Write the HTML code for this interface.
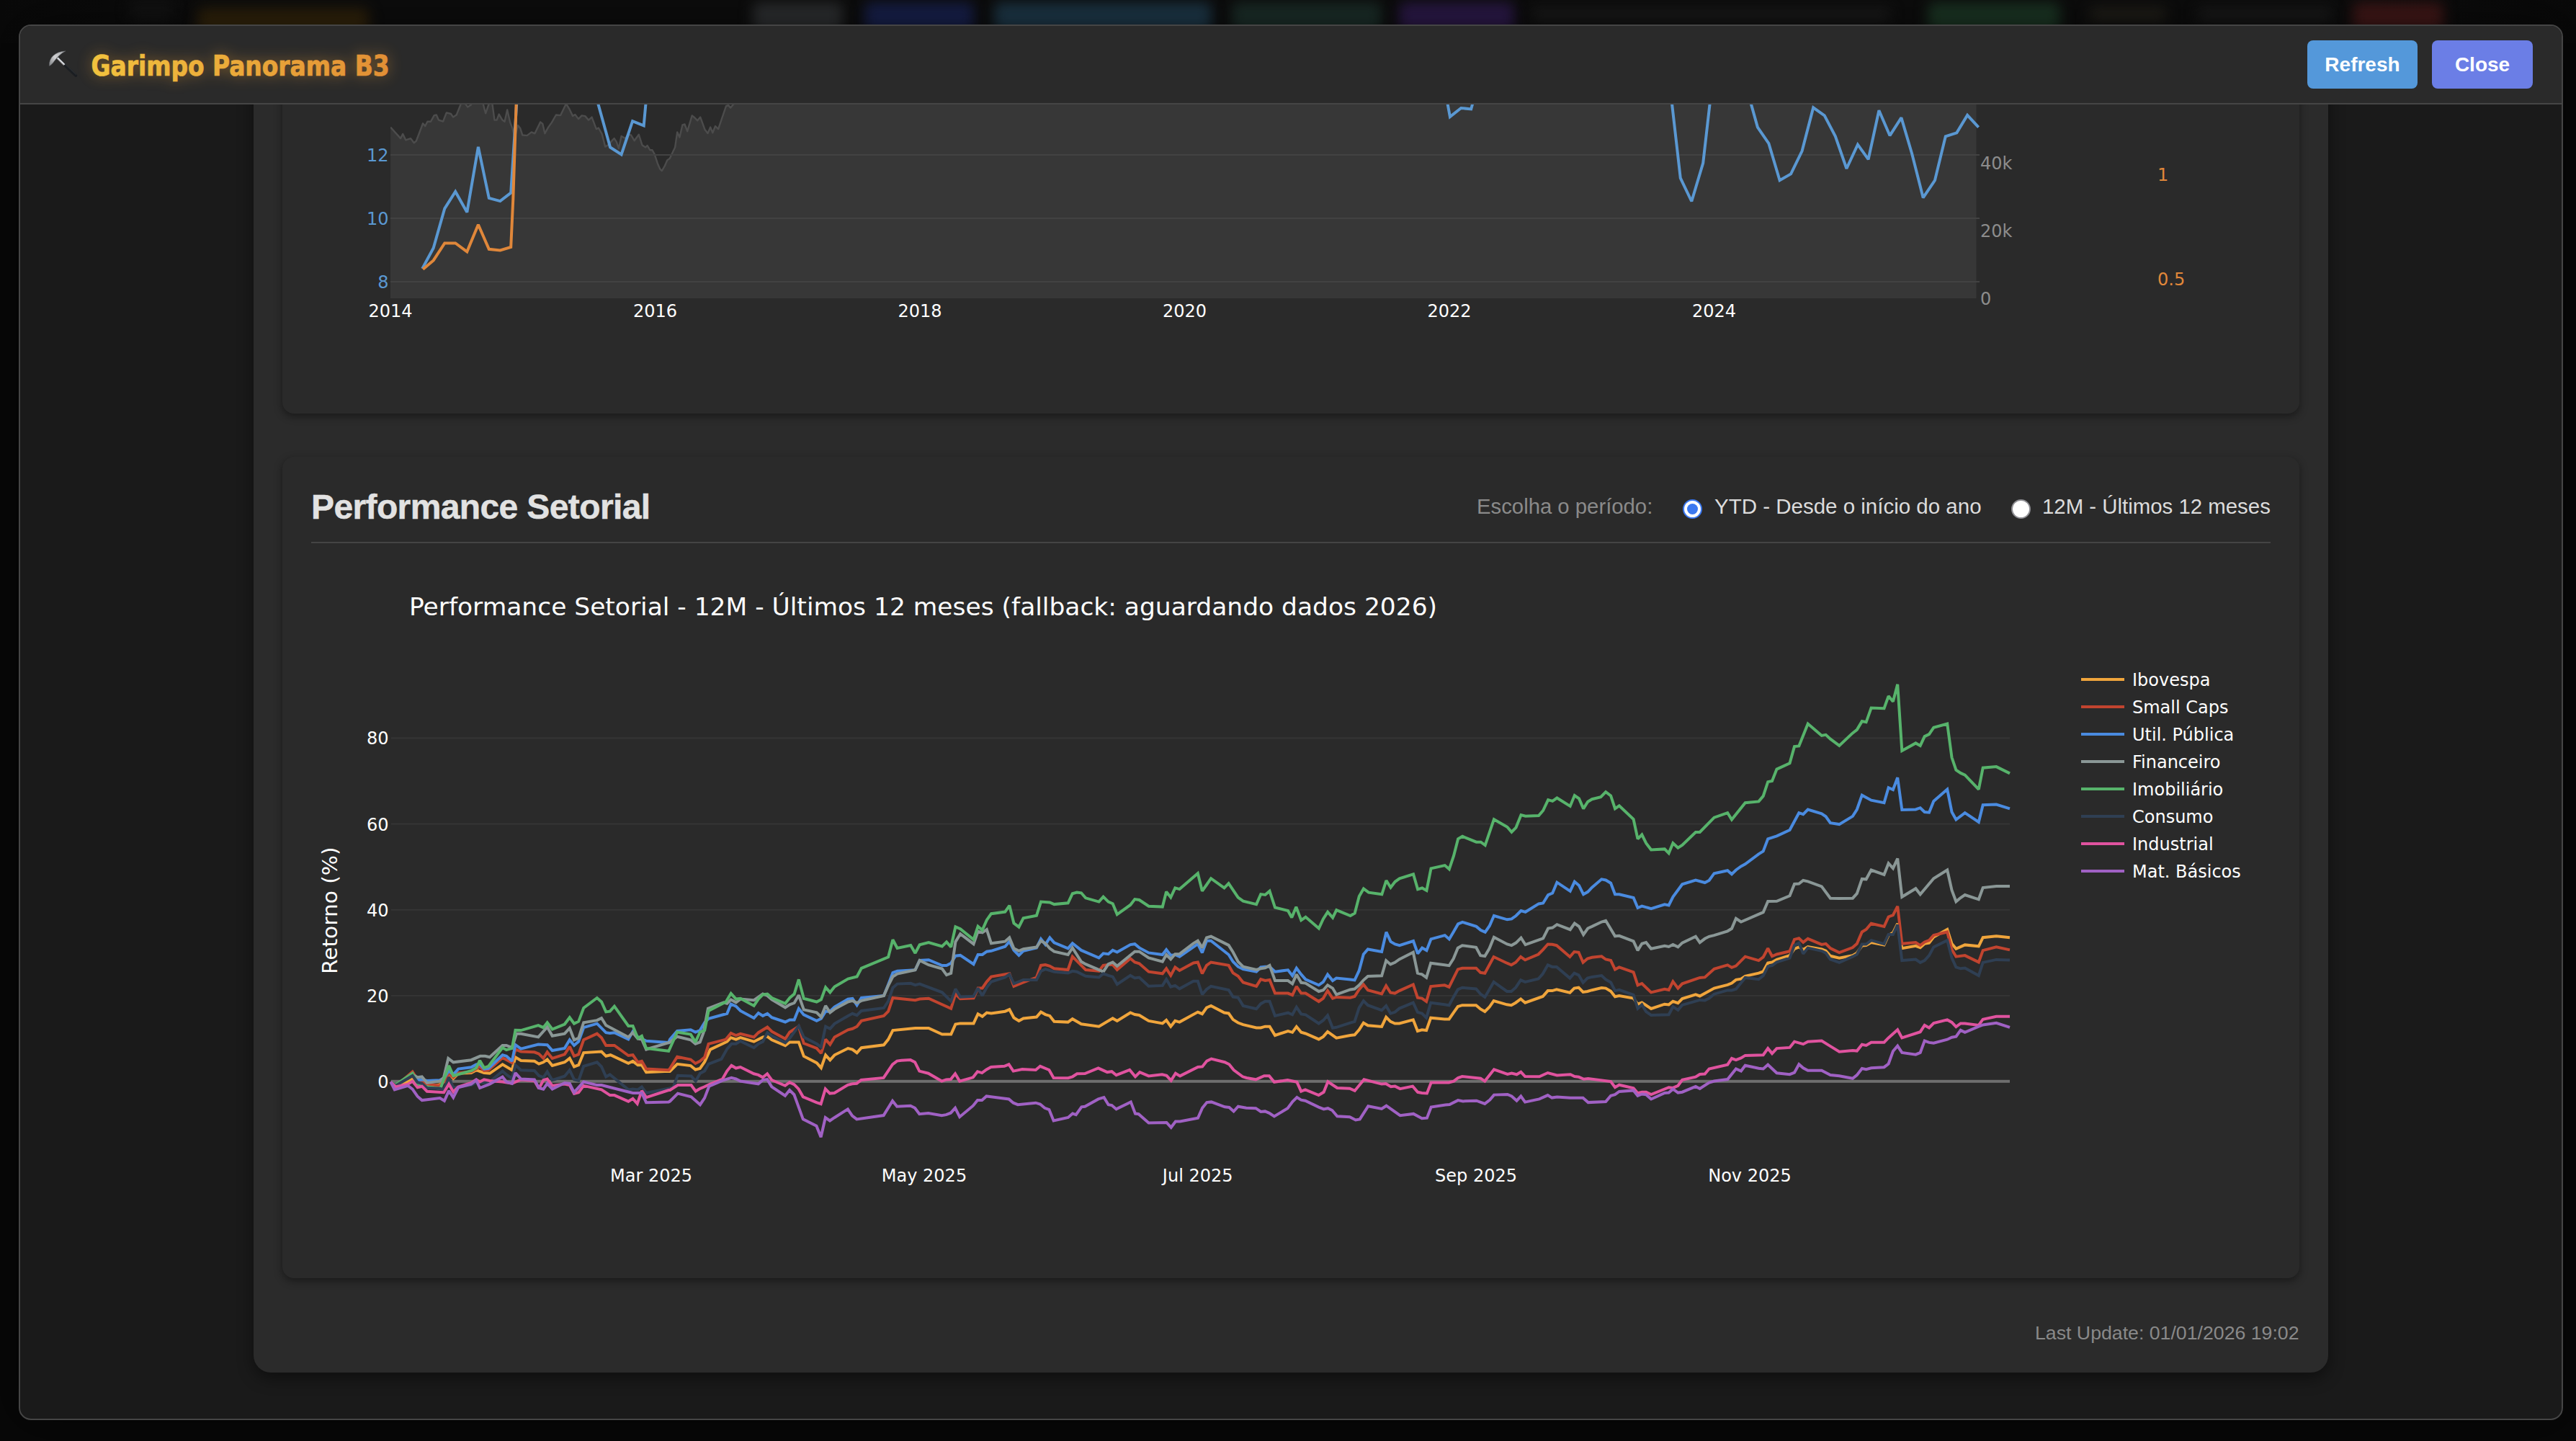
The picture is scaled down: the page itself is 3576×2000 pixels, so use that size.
<!DOCTYPE html>
<html lang="pt-BR"><head><meta charset="utf-8"><title>Garimpo Panorama B3</title>
<style>
html,body{margin:0;padding:0;}
body{width:3576px;height:2000px;overflow:hidden;background:#080808;position:relative;font-family:"Liberation Sans",Arial,sans-serif;}
.blob{position:absolute;top:4px;height:40px;filter:blur(9px);border-radius:8px;}
#modal{position:absolute;left:26px;top:34px;width:3528px;height:1933px;border:2px solid #454545;border-radius:17px;background:#1a1a1a;overflow:hidden;box-shadow:0 0 70px 10px rgba(0,0,0,.45);}
#inner{position:absolute;left:-28px;top:-36px;width:3576px;height:2000px;}
#hdr{position:absolute;left:28px;top:36px;width:3528px;height:107px;background:#2a2a2a;border-bottom:2px solid #454545;z-index:5;}
#panel{position:absolute;left:352px;top:100px;width:2880px;height:1805px;background:#2b2b2b;border-radius:0 0 24px 24px;box-shadow:0 8px 22px rgba(0,0,0,.45);}
.card{position:absolute;left:392px;width:2800px;background:#2a2a2a;border-radius:16px;box-shadow:0 4px 12px rgba(0,0,0,.42);}
#cv{position:absolute;left:0;top:0;}
.btn{position:absolute;top:56px;height:67px;border-radius:8px;color:#fff;font-weight:bold;font-size:28px;line-height:67px;text-align:center;z-index:6;}
.t{position:absolute;white-space:nowrap;}
.radio{position:absolute;width:27px;height:27px;border-radius:50%;box-sizing:border-box;}
</style></head><body>
<div style="position:absolute;left:0;top:0;width:3576px;height:60px;background:linear-gradient(90deg,#090909 0,#0d0d0d 300px,#0d0d0d 3300px,#090909 3576px);"></div>
<div class="blob" style="left:274px;width:238px;top:12px;background:#32240b;"></div>
<div class="blob" style="left:180px;width:60px;top:0px;height:30px;background:#131313;"></div>
<div class="blob" style="left:1045px;width:125px;background:#2e3032;"></div>
<div class="blob" style="left:1200px;width:152px;background:#18214e;"></div>
<div class="blob" style="left:1380px;width:302px;background:#1e394a;"></div>
<div class="blob" style="left:1710px;width:208px;background:#1c2f2a;"></div>
<div class="blob" style="left:1942px;width:160px;background:#2d1a4b;"></div>
<div class="blob" style="left:2125px;width:500px;top:10px;height:20px;background:#1b1b1b;"></div>
<div class="blob" style="left:2676px;width:184px;background:#1c3725;"></div>
<div class="blob" style="left:2900px;width:108px;top:10px;height:20px;background:#22201a;"></div>
<div class="blob" style="left:3050px;width:188px;top:10px;height:20px;background:#1b1b1b;"></div>
<div class="blob" style="left:3266px;width:126px;background:#421818;"></div>
<div id="modal"><div id="inner">
<div id="panel"></div>
<div class="card" style="top:100px;height:474px;"></div>
<div class="card" style="top:634px;height:1140px;"></div>
<svg id="cv" width="3576" height="2000" viewBox="0 0 3576 2000"><defs><clipPath id="c1"><rect x="542" y="100" width="2202" height="314"/></clipPath><clipPath id="c1b"><rect x="542" y="100" width="2210" height="314"/></clipPath></defs><g clip-path="url(#c1)"><path d="M542,414 L542.1,176.6 556.1,192.1 559.2,185.9 563.2,194.3 570.1,192.1 574.7,198.3 577.8,195.8 587.1,171.3 590.2,175.0 593.4,168.8 598.0,168.8 602.7,160.1 605.8,159.5 608.9,166.6 615.1,168.5 619.8,156.4 626.0,158.0 629.1,162.6 633.7,159.5 639.9,144.0 644.6,142.4 649.3,148.6 653.9,145.5 658.6,136.2 669.4,139.3 674.1,157.3 678.8,144.0 681.2,136.2 683.4,144.0 686.5,166.6 689.6,166.6 692.7,158.6 697.4,166.6 700.5,168.8 704.2,152.4 708.3,170.4 711.4,178.1 714.5,190.6 719.1,174.1 722.2,178.1 725.3,187.5 731.6,188.1 737.8,183.4 742.4,185.3 750.2,169.4 753.3,171.9 756.4,185.3 761.1,176.6 765.7,170.4 771.9,159.5 778.1,160.1 785.9,144.0 790.6,151.7 795.2,161.1 798.3,158.9 803.0,165.1 807.6,160.4 812.3,161.1 817.0,166.6 821.6,162.6 827.8,179.1 830.9,177.5 835.6,185.9 840.2,203.6 844.9,200.8 849.6,195.2 852.7,192.1 855.8,196.8 858.9,206.1 862.6,189.0 868.2,192.1 871.9,186.8 876.0,187.5 880.6,195.2 886.8,186.8 891.5,201.4 896.1,204.5 898.6,202.0 902.4,208.3 905.5,208.3 908.6,213.9 913.2,227.8 916.3,234.7 918.8,237.1 922.5,230.9 926.3,222.2 929.7,220.1 933.4,212.3 937.1,204.5 940.2,183.4 943.4,190.6 947.4,173.5 950.5,172.5 954.2,182.2 960.7,160.4 964.5,163.5 968.2,167.3 972.2,162.6 978.4,179.7 982.5,185.0 986.2,176.6 989.3,184.3 993.0,175.0 997.1,179.1 1001.7,165.7 1008.0,147.1 1011.1,146.1 1014.2,149.6 1018.8,144.0 1023.5,136.2 1029.7,123.8 L2743.5,100 L2743.5,414 Z" fill="#373737"/><polyline points="542.1,176.6 556.1,192.1 559.2,185.9 563.2,194.3 570.1,192.1 574.7,198.3 577.8,195.8 587.1,171.3 590.2,175.0 593.4,168.8 598.0,168.8 602.7,160.1 605.8,159.5 608.9,166.6 615.1,168.5 619.8,156.4 626.0,158.0 629.1,162.6 633.7,159.5 639.9,144.0 644.6,142.4 649.3,148.6 653.9,145.5 658.6,136.2 669.4,139.3 674.1,157.3 678.8,144.0 681.2,136.2 683.4,144.0 686.5,166.6 689.6,166.6 692.7,158.6 697.4,166.6 700.5,168.8 704.2,152.4 708.3,170.4 711.4,178.1 714.5,190.6 719.1,174.1 722.2,178.1 725.3,187.5 731.6,188.1 737.8,183.4 742.4,185.3 750.2,169.4 753.3,171.9 756.4,185.3 761.1,176.6 765.7,170.4 771.9,159.5 778.1,160.1 785.9,144.0 790.6,151.7 795.2,161.1 798.3,158.9 803.0,165.1 807.6,160.4 812.3,161.1 817.0,166.6 821.6,162.6 827.8,179.1 830.9,177.5 835.6,185.9 840.2,203.6 844.9,200.8 849.6,195.2 852.7,192.1 855.8,196.8 858.9,206.1 862.6,189.0 868.2,192.1 871.9,186.8 876.0,187.5 880.6,195.2 886.8,186.8 891.5,201.4 896.1,204.5 898.6,202.0 902.4,208.3 905.5,208.3 908.6,213.9 913.2,227.8 916.3,234.7 918.8,237.1 922.5,230.9 926.3,222.2 929.7,220.1 933.4,212.3 937.1,204.5 940.2,183.4 943.4,190.6 947.4,173.5 950.5,172.5 954.2,182.2 960.7,160.4 964.5,163.5 968.2,167.3 972.2,162.6 978.4,179.7 982.5,185.0 986.2,176.6 989.3,184.3 993.0,175.0 997.1,179.1 1001.7,165.7 1008.0,147.1 1011.1,146.1 1014.2,149.6 1018.8,144.0 1023.5,136.2 1029.7,123.8" fill="none" stroke="#4c4c4c" stroke-width="2.4" stroke-linejoin="round"/></g><rect x="542" y="214" width="2206" height="2" fill="#424242"/><rect x="542" y="302" width="2206" height="2" fill="#424242"/><rect x="542" y="390" width="2206" height="2" fill="#424242"/><g clip-path="url(#c1b)" fill="none" stroke-width="4" stroke-linejoin="miter" stroke-miterlimit="2" stroke-linecap="butt"><polyline points="586.2,372.9 601.7,344.3 617.3,289.3 632.2,266.0 648.3,294.6 663.9,203.9 678.8,275.0 694.3,279.1 709.2,267.6 718.5,123.8" stroke="#5a98d2"/><polyline points="827.8,123.8 830.3,144.0 847.1,204.5 862.6,214.5 878.1,168.2 893.7,174.4 898.3,123.8" stroke="#5a98d2"/><polyline points="2008.2,130.4 2009.6,144.4 2012.9,162.1 2028.2,150.0 2042.2,151.4 2044.1,144.4 2045.9,130.4" stroke="#5a98d2"/><polyline points="2320.0,122.2 2321.1,144.8 2332.8,247.2 2348.3,279.5 2364.2,226.3 2373.5,144.8 2374.7,122.2" stroke="#5a98d2"/><polyline points="2429.0,122.2 2431.0,144.8 2439.9,176.6 2455.4,199.1 2470.6,250.3 2486.1,241.4 2501.6,209.6 2517.2,149.4 2532.7,160.3 2547.8,189.0 2563.4,234.0 2578.9,200.7 2593.6,221.2 2608.4,153.3 2623.5,188.2 2639.4,163.4 2654.2,213.5 2669.7,274.4 2686.0,250.3 2700.8,189.4 2716.3,184.3 2731.1,159.9 2746.6,176.6" stroke="#5a98d2"/><polyline points="587.1,373.8 601.7,361.4 617.3,337.5 632.2,337.5 648.3,349.3 663.9,311.7 678.8,345.8 694.3,347.4 709.2,343.0 712.3,276.0 717.3,123.8" stroke="#e0873a"/></g><g font-family="'DejaVu Sans', Verdana, sans-serif" font-size="24"><text x="539.5" y="224" text-anchor="end" fill="#5a98d2">12</text><text x="539.5" y="312" text-anchor="end" fill="#5a98d2">10</text><text x="539.5" y="400" text-anchor="end" fill="#5a98d2">8</text><text x="542" y="440" text-anchor="middle" fill="#ffffff">2014</text><text x="909.5" y="440" text-anchor="middle" fill="#ffffff">2016</text><text x="1277" y="440" text-anchor="middle" fill="#ffffff">2018</text><text x="1644.5" y="440" text-anchor="middle" fill="#ffffff">2020</text><text x="2012" y="440" text-anchor="middle" fill="#ffffff">2022</text><text x="2379.5" y="440" text-anchor="middle" fill="#ffffff">2024</text><text x="2749" y="234.5" fill="#8c8c8c">40k</text><text x="2749" y="329" fill="#8c8c8c">20k</text><text x="2749" y="423" fill="#8c8c8c">0</text><text x="2995" y="250.5" fill="#e0873a">1</text><text x="2995" y="396" fill="#e0873a">0.5</text></g><rect x="543" y="1023.4000000000001" width="2247" height="2" fill="#353535"/><rect x="543" y="1142.6" width="2247" height="2" fill="#353535"/><rect x="543" y="1261.8" width="2247" height="2" fill="#353535"/><rect x="543" y="1380.9" width="2247" height="2" fill="#353535"/><rect x="543" y="1498.8" width="2247" height="4" fill="#6e6e6e"/><g fill="none" stroke-width="4" stroke-linejoin="miter" stroke-miterlimit="2" stroke-linecap="butt"><polyline points="542.3,1501.5 549.3,1507.7 566.4,1501.5 572.6,1497.6 579.6,1503.0 585.8,1502.3 592.8,1507.7 610.7,1505.4 616.1,1501.5 623.1,1489.8 629.3,1496.8 636.3,1489.8 654.1,1489.1 661.1,1485.2 672.0,1489.1 679.8,1489.8 697.6,1477.4 710.8,1485.2 715.5,1467.3 723.2,1472.0 741.9,1472.8 748.1,1476.6 754.3,1474.3 759.7,1470.4 766.7,1479.0 783.8,1474.3 790.8,1468.9 797.0,1480.5 803.2,1478.2 810.2,1461.1 835.0,1459.6 841.2,1465.8 847.5,1464.2 872.3,1475.9 878.5,1472.8 885.5,1478.2 890.9,1478.2 897.1,1488.3 928.2,1486.7 930.0,1486.9 940.1,1476.8 958.8,1479.1 965.4,1484.5 971.7,1483.0 978.2,1473.7 986.0,1456.6 1009.3,1445.7 1014.7,1440.2 1021.7,1442.6 1027.9,1440.2 1046.6,1445.7 1059.0,1439.5 1065.3,1438.7 1071.5,1443.3 1090.1,1451.1 1096.3,1446.4 1108.8,1446.4 1115.8,1465.9 1133.7,1475.2 1139.9,1482.2 1146.1,1464.3 1152.3,1471.3 1158.5,1464.3 1177.2,1455.0 1183.4,1456.6 1189.6,1461.2 1195.8,1454.2 1226.9,1450.3 1233.1,1442.6 1239.4,1430.1 1270.5,1427.0 1289.1,1427.0 1307.8,1435.6 1320.2,1435.6 1326.4,1421.6 1333.1,1420.4 1351.5,1420.4 1357.6,1407.2 1363.7,1410.7 1369.8,1405.5 1376.0,1406.4 1395.2,1403.7 1401.3,1401.1 1407.4,1412.5 1414.4,1416.9 1420.6,1413.4 1438.9,1411.6 1445.0,1404.6 1451.2,1408.1 1457.3,1409.9 1463.4,1417.7 1482.6,1418.6 1488.8,1414.2 1501.0,1421.2 1525.5,1424.7 1544.7,1413.4 1550.8,1416.9 1569.2,1405.5 1575.3,1408.1 1581.5,1409.0 1594.6,1416.9 1613.8,1420.4 1619.1,1416.0 1625.2,1424.7 1631.3,1416.9 1637.4,1418.6 1662.8,1404.6 1668.9,1407.2 1675.0,1398.5 1681.1,1395.9 1699.5,1405.5 1705.6,1406.4 1711.7,1415.1 1718.7,1419.5 1725.7,1422.1 1744.1,1426.5 1750.2,1426.5 1756.3,1424.7 1762.5,1424.7 1770.0,1437.0 1788.0,1431.0 1794.1,1432.8 1799.8,1424.9 1806.3,1432.8 1812.4,1434.5 1830.7,1442.4 1836.9,1438.9 1843.0,1431.9 1855.2,1440.6 1874.4,1437.1 1880.5,1436.3 1886.7,1429.3 1892.8,1419.7 1898.9,1423.2 1918.1,1424.9 1924.2,1411.8 1930.3,1417.9 1936.4,1420.5 1942.6,1420.5 1961.8,1415.3 1967.9,1431.0 1974.0,1429.3 1980.1,1430.1 1986.2,1412.7 2005.4,1414.4 2011.6,1414.4 2017.7,1405.7 2023.8,1397.0 2029.9,1395.2 2049.1,1395.2 2055.2,1400.4 2061.3,1403.9 2067.5,1397.8 2073.6,1389.1 2091.9,1394.3 2098.0,1395.2 2104.1,1391.7 2111.1,1386.5 2117.2,1391.7 2141.7,1383.0 2148.7,1375.1 2154.8,1375.1 2160.9,1373.4 2179.3,1377.7 2185.4,1371.6 2191.5,1370.7 2197.6,1376.9 2203.7,1376.0 2210.0,1374.2 2223.3,1371.1 2229.1,1371.6 2236.1,1375.8 2242.0,1383.2 2247.8,1382.1 2267.6,1385.6 2273.5,1393.7 2279.3,1391.4 2292.1,1400.0 2310.8,1393.7 2316.6,1394.4 2322.4,1389.8 2329.4,1392.1 2335.3,1386.0 2353.9,1380.4 2359.7,1382.5 2379.6,1371.6 2398.2,1366.9 2404.0,1364.6 2409.9,1359.9 2416.9,1358.7 2422.7,1354.8 2441.4,1350.6 2447.7,1348.3 2454.2,1336.6 2460.0,1335.4 2466.5,1331.9 2484.5,1326.1 2491.0,1316.8 2497.3,1314.4 2503.2,1317.9 2509.7,1314.0 2528.8,1317.5 2534.6,1319.8 2540.9,1326.8 2553.3,1329.6 2571.9,1326.1 2577.8,1322.6 2584.8,1312.6 2590.6,1312.1 2597.6,1308.1 2615.5,1311.4 2621.6,1298.1 2627.9,1294.6 2634.2,1281.8 2640.3,1316.1 2659.4,1312.8 2665.7,1315.1 2671.7,1309.8 2678.0,1308.6 2684.3,1300.5 2703.2,1290.0 2709.5,1309.8 2715.4,1316.8 2727.7,1311.4 2746.8,1313.3 2752.7,1301.2 2771.3,1299.3 2790.0,1301.2" stroke="#f0a53c"/><polyline points="542.3,1501.5 549.3,1507.7 572.6,1487.5 579.6,1498.4 585.8,1500.7 592.8,1504.6 610.7,1506.9 616.1,1501.5 623.1,1489.8 629.3,1495.3 636.3,1489.1 654.1,1487.5 666.1,1480.5 672.0,1486.0 678.2,1485.2 697.6,1468.1 710.8,1475.1 715.5,1456.5 723.2,1459.6 741.9,1460.3 748.1,1462.7 754.3,1468.9 759.7,1460.3 766.7,1468.9 783.8,1463.4 790.8,1452.6 797.0,1465.8 803.2,1463.4 810.2,1443.3 828.8,1434.7 835.0,1440.2 841.2,1451.0 852.9,1451.0 872.3,1465.0 878.5,1464.2 885.5,1474.3 890.9,1472.8 897.1,1483.6 928.2,1485.2 930.0,1483.0 940.1,1466.7 958.8,1470.5 965.4,1476.0 971.7,1472.9 978.2,1467.4 983.6,1448.8 1007.7,1442.6 1014.7,1434.0 1021.7,1437.1 1027.9,1434.8 1046.6,1439.5 1052.8,1433.2 1065.3,1425.5 1071.5,1431.7 1090.1,1441.8 1096.3,1432.5 1108.8,1424.7 1115.8,1448.0 1133.7,1455.0 1139.9,1462.0 1146.1,1442.6 1152.3,1449.6 1158.5,1439.5 1177.2,1429.3 1183.4,1427.8 1189.6,1424.7 1195.8,1416.9 1226.9,1409.9 1233.1,1403.7 1239.4,1385.0 1270.5,1388.2 1276.7,1386.6 1289.1,1385.8 1320.2,1399.8 1326.4,1379.6 1333.1,1386.3 1351.5,1385.4 1357.6,1371.4 1363.7,1371.4 1369.8,1362.6 1376.0,1355.6 1401.3,1351.3 1407.4,1368.8 1420.6,1363.5 1438.9,1356.5 1445.0,1339.9 1451.2,1339.0 1457.3,1340.8 1463.4,1344.3 1482.6,1346.0 1488.8,1327.7 1501.0,1339.9 1507.1,1346.0 1525.5,1347.8 1531.6,1339.9 1538.6,1339.0 1544.7,1339.0 1550.8,1346.0 1569.2,1330.3 1575.3,1335.5 1581.5,1337.3 1594.6,1348.7 1613.8,1351.3 1619.1,1344.3 1625.2,1353.9 1631.3,1342.5 1637.4,1346.9 1656.7,1336.4 1662.8,1335.5 1668.9,1351.3 1675.0,1339.9 1681.1,1335.5 1705.6,1339.9 1711.7,1350.4 1718.7,1354.8 1725.7,1363.5 1744.1,1368.8 1750.2,1359.1 1756.3,1360.9 1762.5,1360.0 1770.0,1378.4 1788.0,1378.6 1794.1,1381.2 1799.8,1369.0 1806.3,1378.6 1812.4,1378.6 1830.7,1390.0 1836.9,1385.6 1843.0,1375.1 1850.0,1385.6 1855.2,1383.9 1874.4,1384.7 1880.5,1383.0 1886.7,1373.4 1892.8,1366.4 1898.9,1374.2 1918.1,1379.5 1924.2,1368.1 1930.3,1377.7 1936.4,1378.6 1942.6,1375.1 1961.8,1366.4 1967.9,1384.7 1974.0,1385.6 1980.1,1390.0 1986.2,1369.0 2005.4,1367.3 2011.6,1369.9 2017.7,1357.6 2023.8,1345.4 2029.9,1343.7 2049.1,1343.7 2055.2,1349.8 2061.3,1350.7 2067.5,1339.3 2073.6,1328.0 2091.9,1336.7 2098.0,1339.3 2104.1,1335.8 2111.1,1328.0 2117.2,1332.3 2135.6,1324.5 2141.7,1318.3 2148.7,1310.5 2154.8,1310.8 2160.9,1312.2 2179.3,1328.0 2185.4,1321.0 2191.5,1321.8 2197.6,1335.8 2203.7,1330.6 2210.0,1328.8 2223.3,1327.3 2229.1,1331.5 2236.1,1333.1 2242.0,1345.5 2247.8,1342.4 2267.6,1349.4 2273.5,1367.4 2279.3,1365.0 2292.1,1377.4 2310.8,1372.7 2316.6,1373.9 2322.4,1362.2 2329.4,1371.6 2335.3,1365.3 2359.7,1356.9 2366.7,1356.4 2379.6,1344.8 2398.2,1339.4 2404.0,1342.9 2409.9,1340.6 2422.7,1327.7 2441.4,1333.1 2447.7,1328.4 2454.2,1316.3 2460.0,1327.3 2466.5,1324.5 2484.5,1320.3 2491.0,1303.9 2497.3,1302.3 2503.2,1307.9 2509.7,1302.8 2528.8,1310.9 2534.6,1309.8 2540.9,1316.1 2553.3,1322.1 2571.9,1315.1 2577.8,1309.8 2584.8,1293.5 2590.6,1290.0 2597.6,1281.8 2615.5,1286.0 2621.6,1272.5 2627.9,1270.1 2634.2,1257.8 2640.3,1309.8 2659.4,1308.1 2665.7,1312.1 2671.7,1307.4 2678.0,1305.1 2684.3,1298.1 2703.2,1293.5 2709.5,1317.9 2715.4,1327.7 2727.7,1326.1 2746.8,1335.4 2752.7,1319.1 2771.3,1314.4 2790.0,1318.4" stroke="#c1442f"/><polyline points="542.3,1501.5 549.3,1506.5 572.6,1492.2 579.6,1499.2 585.8,1498.4 592.8,1499.9 610.7,1499.2 616.1,1496.8 623.1,1486.0 629.3,1491.4 636.3,1483.6 654.1,1481.3 661.1,1477.4 666.1,1476.6 672.0,1483.6 678.2,1482.9 697.6,1464.2 703.0,1465.8 710.8,1472.8 715.5,1450.2 723.2,1455.7 747.3,1449.5 759.7,1450.2 766.7,1458.0 783.8,1454.9 790.8,1443.3 797.0,1451.0 803.2,1445.6 810.2,1426.2 828.8,1420.7 841.2,1433.2 846.7,1433.9 852.9,1433.2 872.3,1442.5 878.5,1431.6 885.5,1439.4 897.1,1444.8 928.2,1447.1 930.0,1442.6 940.1,1430.9 958.8,1429.3 965.4,1432.5 971.7,1430.1 978.2,1419.2 983.6,1413.8 1009.3,1406.8 1014.7,1393.6 1021.7,1396.7 1027.9,1402.9 1046.6,1413.0 1052.8,1406.0 1059.0,1409.9 1065.3,1406.8 1071.5,1412.2 1090.1,1418.5 1096.3,1415.4 1102.6,1415.4 1108.8,1399.8 1115.8,1408.4 1133.7,1416.9 1139.9,1413.8 1146.1,1403.7 1152.3,1403.7 1158.5,1397.5 1177.2,1386.6 1183.4,1385.8 1189.6,1395.1 1195.8,1385.0 1226.9,1381.9 1233.1,1366.4 1239.4,1350.1 1245.6,1347.7 1270.5,1346.2 1276.7,1333.0 1289.1,1332.2 1307.8,1340.0 1314.0,1340.0 1320.2,1336.8 1326.4,1326.7 1333.1,1325.9 1351.5,1338.2 1357.6,1325.0 1363.7,1325.0 1369.8,1320.7 1376.0,1319.8 1395.2,1313.7 1401.3,1306.7 1407.4,1318.9 1414.4,1325.9 1420.6,1319.8 1438.9,1315.4 1445.0,1303.2 1451.2,1311.1 1457.3,1301.4 1463.4,1308.4 1482.6,1316.3 1488.8,1309.3 1501.0,1318.9 1525.5,1329.4 1531.6,1323.3 1538.6,1324.2 1544.7,1318.9 1550.8,1321.5 1569.2,1311.1 1575.3,1310.2 1581.5,1315.4 1594.6,1322.4 1613.8,1325.0 1619.1,1318.0 1625.2,1325.9 1631.3,1325.0 1637.4,1327.7 1662.8,1310.2 1668.9,1322.4 1675.0,1305.8 1681.1,1305.8 1705.6,1325.0 1711.7,1334.7 1718.7,1341.7 1725.7,1345.2 1744.1,1348.7 1750.2,1342.5 1756.3,1341.7 1762.5,1341.7 1770.0,1348.7 1788.0,1346.3 1794.1,1354.2 1799.8,1343.7 1806.3,1352.4 1812.4,1359.4 1830.7,1367.3 1836.9,1362.9 1843.0,1352.4 1850.0,1361.1 1855.2,1357.6 1874.4,1359.4 1880.5,1360.3 1886.7,1347.2 1892.8,1324.5 1898.9,1317.5 1918.1,1321.0 1924.4,1293.7 1930.5,1306.9 1936.6,1310.4 1942.8,1312.1 1962.0,1306.0 1968.1,1323.5 1974.2,1315.6 1980.4,1319.1 1986.5,1303.4 2005.7,1298.1 2011.8,1303.4 2018.0,1292.9 2024.1,1282.4 2030.2,1279.8 2049.4,1285.9 2055.6,1291.1 2061.7,1293.7 2067.8,1285.0 2073.9,1271.0 2092.3,1276.3 2098.4,1275.4 2104.5,1271.0 2111.5,1264.0 2117.6,1265.8 2136.0,1254.4 2142.1,1253.5 2149.1,1242.2 2155.2,1239.5 2161.4,1224.7 2179.7,1236.9 2185.8,1223.8 2192.0,1229.0 2198.1,1241.3 2204.2,1237.8 2210.0,1231.7 2223.3,1220.3 2229.1,1221.5 2236.1,1225.7 2242.0,1241.3 2247.8,1241.3 2267.6,1246.0 2273.5,1260.0 2279.3,1257.6 2292.1,1261.1 2310.8,1255.3 2316.6,1256.5 2322.4,1244.8 2335.3,1227.3 2353.9,1221.5 2366.7,1225.0 2372.6,1222.0 2379.6,1212.2 2398.2,1208.2 2404.0,1213.3 2409.9,1207.5 2416.9,1202.4 2422.7,1199.3 2441.4,1185.3 2447.7,1181.4 2454.2,1164.4 2466.5,1160.4 2484.5,1152.0 2497.3,1128.2 2503.2,1130.1 2509.7,1123.5 2528.8,1129.4 2534.6,1133.3 2540.9,1142.2 2553.3,1144.1 2571.9,1132.9 2577.8,1123.5 2584.8,1103.7 2597.6,1110.7 2615.5,1114.2 2621.6,1093.2 2627.9,1096.0 2634.2,1079.2 2640.3,1124.0 2659.4,1123.5 2665.7,1121.2 2671.7,1127.0 2678.0,1127.7 2684.3,1111.9 2703.2,1095.6 2709.5,1127.0 2715.4,1137.5 2727.7,1128.2 2746.8,1141.0 2752.7,1117.3 2771.3,1116.6 2790.0,1122.4" stroke="#4a8be0"/><polyline points="542.3,1501.5 549.3,1506.1 572.6,1491.4 579.6,1495.3 585.8,1494.5 592.8,1503.0 610.7,1500.7 616.1,1495.3 622.3,1468.9 629.3,1474.3 654.1,1471.2 666.6,1465.8 673.5,1465.8 679.8,1467.3 697.6,1451.0 703.0,1451.0 710.8,1454.1 717.0,1434.7 723.2,1434.7 747.3,1439.4 759.7,1425.4 766.7,1437.8 783.8,1434.7 790.8,1427.0 797.0,1443.3 803.2,1440.9 810.2,1419.2 828.8,1416.1 835.0,1413.0 841.2,1423.1 872.3,1439.4 878.5,1433.2 885.5,1441.7 890.9,1442.5 897.1,1456.5 928.2,1447.1 930.0,1446.4 940.1,1438.7 958.8,1443.3 965.4,1448.8 971.7,1446.4 976.6,1433.2 982.9,1399.8 1004.6,1391.3 1009.3,1392.8 1014.7,1387.4 1021.7,1391.3 1027.9,1386.6 1046.6,1388.2 1059.0,1379.6 1065.3,1381.9 1071.5,1387.4 1090.1,1398.3 1096.3,1394.4 1102.6,1392.0 1108.8,1381.2 1115.8,1401.4 1133.7,1405.3 1139.9,1411.5 1146.1,1395.9 1152.3,1405.3 1158.5,1400.6 1177.2,1390.5 1183.4,1388.9 1189.6,1392.0 1195.8,1388.9 1226.9,1381.9 1233.1,1367.9 1239.4,1355.5 1245.6,1351.6 1270.5,1346.2 1276.7,1333.0 1289.1,1339.2 1307.8,1344.6 1314.0,1353.2 1320.2,1350.8 1326.4,1307.3 1333.1,1296.2 1351.5,1310.2 1357.6,1292.7 1363.7,1294.4 1369.8,1290.1 1376.0,1309.3 1395.2,1306.7 1401.3,1301.4 1407.4,1316.3 1414.4,1319.8 1420.6,1317.2 1438.9,1314.6 1445.0,1305.8 1451.2,1309.3 1457.3,1316.3 1463.4,1320.7 1482.6,1325.0 1488.8,1315.4 1501.0,1334.7 1507.1,1338.2 1531.6,1348.7 1538.6,1338.2 1544.7,1335.5 1550.8,1340.8 1575.3,1320.7 1581.5,1320.7 1594.6,1329.4 1613.8,1334.7 1619.1,1325.0 1625.2,1331.2 1631.3,1324.2 1637.4,1324.2 1656.7,1309.3 1662.8,1305.8 1668.9,1315.4 1675.0,1301.4 1681.1,1299.7 1705.6,1311.9 1711.7,1321.5 1718.7,1334.7 1725.7,1341.7 1744.1,1346.0 1750.2,1344.3 1756.3,1343.4 1762.5,1339.9 1770.0,1360.9 1788.0,1361.1 1794.1,1365.5 1799.8,1352.4 1806.3,1363.8 1812.4,1364.6 1830.7,1376.0 1836.9,1374.2 1843.0,1367.3 1850.0,1371.6 1855.2,1380.4 1874.4,1373.4 1880.5,1372.5 1886.7,1367.3 1892.8,1360.3 1898.9,1355.0 1918.1,1354.2 1924.2,1333.2 1930.3,1338.4 1936.4,1335.8 1942.6,1331.4 1961.8,1321.8 1967.9,1350.7 1974.0,1352.4 1980.1,1356.8 1986.2,1336.7 2005.4,1339.3 2011.6,1340.2 2017.7,1330.6 2023.8,1315.7 2029.9,1312.2 2049.1,1314.8 2055.2,1326.2 2061.3,1327.1 2067.5,1316.6 2073.9,1300.7 2092.3,1310.4 2098.4,1312.1 2104.5,1308.6 2111.5,1301.6 2117.6,1311.2 2142.1,1302.5 2149.1,1288.5 2155.2,1287.6 2161.4,1283.2 2179.7,1290.2 2185.8,1281.5 2192.0,1285.9 2198.1,1297.2 2204.2,1288.5 2210.0,1285.9 2223.3,1279.5 2229.1,1277.8 2242.0,1299.3 2247.8,1298.8 2267.6,1306.3 2273.5,1319.1 2279.3,1309.8 2285.1,1308.1 2292.1,1316.8 2310.8,1312.8 2316.6,1314.0 2322.4,1310.9 2329.4,1314.4 2335.3,1308.6 2353.9,1299.8 2359.7,1308.1 2366.7,1302.8 2372.6,1299.8 2379.6,1298.1 2398.2,1292.3 2404.0,1288.8 2409.9,1274.8 2416.9,1279.5 2447.7,1266.2 2454.2,1251.0 2466.5,1250.8 2484.5,1243.3 2491.0,1227.0 2497.3,1226.5 2503.2,1222.0 2509.7,1223.4 2528.8,1230.4 2540.9,1246.7 2553.3,1247.1 2571.9,1246.7 2577.8,1240.1 2584.8,1219.9 2590.6,1220.3 2597.6,1207.5 2615.5,1214.0 2621.6,1198.2 2627.9,1205.2 2634.2,1191.6 2640.3,1244.8 2659.4,1233.2 2665.7,1241.3 2684.3,1219.2 2703.2,1207.5 2709.5,1235.5 2715.4,1251.3 2721.7,1246.0 2727.7,1242.0 2746.8,1248.3 2752.7,1232.0 2771.3,1230.1 2790.0,1229.9" stroke="#8a9796"/><polyline points="542.3,1501.5 549.3,1505.4 572.6,1489.8 579.6,1504.6 581.9,1505.4 592.8,1508.5 611.4,1510.8 623.1,1479.0 629.3,1493.0 654.9,1486.0 661.1,1482.1 666.1,1472.0 672.0,1482.1 678.2,1479.8 697.6,1454.1 703.0,1457.2 710.8,1454.9 715.5,1429.8 723.2,1430.1 747.3,1423.1 754.3,1426.2 759.7,1419.2 766.7,1428.5 783.8,1421.5 790.8,1412.2 797.0,1420.7 803.2,1417.6 810.2,1399.0 828.8,1385.0 835.0,1390.5 841.2,1404.4 846.7,1403.7 852.9,1396.7 872.3,1423.9 878.5,1423.9 885.5,1440.9 890.9,1437.8 897.1,1454.9 928.2,1458.8 930.0,1455.0 940.1,1432.5 958.8,1435.6 965.4,1446.4 971.7,1432.5 978.2,1430.1 983.6,1402.9 1007.7,1390.5 1014.7,1378.8 1021.7,1386.6 1027.9,1385.8 1046.6,1395.9 1052.8,1386.6 1059.0,1380.4 1065.3,1379.6 1071.5,1385.0 1090.1,1392.8 1096.3,1385.0 1102.6,1379.6 1108.8,1359.4 1115.8,1385.8 1133.7,1390.5 1139.9,1387.4 1146.1,1370.3 1152.3,1377.3 1158.5,1369.5 1177.2,1358.6 1189.6,1355.5 1195.8,1343.8 1233.1,1328.3 1239.4,1304.2 1245.6,1315.9 1264.2,1312.0 1270.5,1322.9 1276.7,1311.2 1289.1,1308.1 1307.8,1313.5 1314.0,1307.3 1320.2,1314.3 1326.4,1286.3 1333.1,1289.2 1351.5,1304.1 1357.6,1285.7 1363.7,1290.9 1369.8,1276.9 1376.0,1268.2 1395.2,1265.6 1401.3,1256.8 1407.4,1281.3 1414.4,1286.6 1420.6,1274.3 1438.9,1270.8 1445.0,1251.6 1457.3,1252.5 1463.4,1255.1 1482.6,1253.3 1488.8,1240.2 1494.9,1238.5 1501.0,1239.3 1507.1,1246.3 1525.5,1251.6 1531.6,1244.6 1538.6,1251.6 1544.7,1254.2 1550.8,1269.1 1569.2,1256.0 1575.3,1248.1 1581.5,1249.0 1594.6,1257.7 1613.8,1258.6 1619.1,1237.6 1625.2,1245.5 1631.3,1232.4 1637.4,1234.1 1662.8,1212.2 1668.9,1236.7 1675.0,1228.0 1681.1,1219.2 1699.5,1232.4 1705.6,1226.2 1718.7,1245.5 1725.7,1250.7 1744.1,1255.1 1750.2,1241.1 1756.3,1242.0 1762.5,1236.7 1770.0,1259.5 1788.0,1264.0 1793.2,1273.6 1799.3,1258.8 1806.3,1277.1 1812.5,1272.8 1830.8,1288.5 1836.9,1275.4 1843.1,1265.8 1850.1,1273.6 1855.3,1263.1 1874.6,1271.0 1880.7,1267.5 1886.8,1243.9 1892.9,1233.4 1899.9,1238.7 1918.3,1241.3 1924.4,1222.0 1930.5,1231.7 1936.6,1223.8 1942.8,1219.4 1962.0,1213.3 1968.1,1234.3 1974.2,1232.5 1980.4,1236.0 1986.5,1205.4 2005.7,1201.1 2011.8,1206.3 2018.0,1187.9 2024.1,1164.3 2030.2,1160.8 2049.4,1168.7 2055.6,1168.7 2061.7,1173.1 2073.9,1137.2 2092.3,1147.7 2098.4,1154.7 2104.5,1148.6 2111.5,1131.1 2117.6,1132.8 2136.0,1132.0 2142.1,1125.0 2149.1,1110.1 2155.2,1111.9 2161.4,1107.5 2179.7,1118.9 2185.8,1104.0 2192.0,1108.4 2198.1,1122.4 2204.2,1112.7 2210.0,1109.2 2222.2,1106.1 2229.1,1099.1 2236.1,1104.4 2242.0,1122.4 2247.8,1118.4 2267.6,1137.1 2273.5,1164.4 2279.3,1158.5 2285.1,1170.2 2292.1,1179.5 2310.8,1178.4 2316.6,1184.2 2322.4,1170.2 2329.4,1176.7 2335.3,1173.0 2353.9,1155.0 2359.7,1155.0 2379.6,1134.7 2398.2,1128.2 2404.0,1137.5 2422.7,1114.2 2441.4,1112.4 2447.7,1104.9 2454.2,1085.1 2460.0,1083.9 2466.5,1067.6 2484.5,1059.4 2491.0,1036.1 2497.3,1035.4 2509.7,1004.6 2528.8,1020.9 2534.6,1019.8 2540.9,1025.6 2553.3,1034.9 2571.9,1017.4 2577.8,1012.8 2584.8,1001.1 2590.6,1002.3 2597.6,982.5 2615.5,983.2 2621.6,966.1 2627.9,973.8 2634.2,949.8 2640.3,1041.9 2659.4,1031.4 2665.7,1034.9 2671.7,1022.1 2678.0,1019.1 2684.3,1009.8 2703.2,1004.6 2709.5,1051.3 2715.4,1068.7 2721.7,1072.9 2727.7,1075.7 2746.8,1095.6 2752.7,1065.7 2771.3,1064.1 2790.0,1073.4" stroke="#57b36b"/><polyline points="542.3,1501.5 549.3,1506.9 572.6,1493.0 579.6,1502.3 585.8,1503.8 592.8,1510.0 610.7,1510.8 616.1,1512.4 623.1,1495.3 629.3,1509.3 636.3,1508.5 654.1,1506.1 661.1,1502.3 672.0,1503.0 679.8,1501.5 689.1,1493.7 697.6,1486.7 703.0,1491.4 710.8,1496.8 715.5,1478.2 723.2,1485.2 741.9,1486.0 748.1,1493.0 754.3,1495.3 759.7,1487.5 766.7,1499.2 783.8,1493.7 790.8,1485.2 797.0,1498.4 803.2,1499.9 810.2,1479.8 828.8,1474.3 835.0,1480.5 841.2,1494.5 846.7,1491.4 872.3,1512.4 878.5,1511.6 885.5,1512.4 890.9,1508.5 897.1,1517.0 928.2,1510.8 934.4,1509.3 940.9,1492.8 959.5,1493.4 965.7,1500.6 971.9,1489.7 978.1,1486.6 983.6,1476.8 1001.5,1469.8 1009.3,1455.8 1015.5,1448.8 1021.7,1448.8 1027.9,1444.9 1046.6,1454.2 1052.8,1448.8 1059.0,1445.7 1065.3,1433.2 1071.5,1437.9 1090.1,1447.2 1096.3,1441.0 1108.8,1423.9 1115.8,1439.5 1133.7,1448.8 1139.9,1453.4 1146.1,1424.7 1152.3,1427.8 1158.5,1420.8 1177.2,1409.9 1183.4,1406.8 1189.6,1409.1 1195.8,1402.9 1226.9,1399.0 1233.1,1389.7 1239.4,1371.0 1245.6,1365.6 1264.2,1364.8 1270.5,1367.2 1276.7,1365.6 1307.8,1377.3 1320.2,1389.7 1326.4,1372.6 1333.1,1383.6 1351.5,1382.8 1357.6,1371.4 1363.7,1381.9 1369.8,1370.5 1376.0,1362.6 1395.2,1356.5 1401.3,1352.2 1407.4,1365.3 1420.6,1360.0 1438.9,1360.0 1445.0,1347.8 1451.2,1345.2 1463.4,1348.7 1482.6,1350.4 1488.8,1347.8 1494.9,1348.7 1507.1,1354.8 1525.5,1356.5 1531.6,1351.3 1538.6,1353.9 1544.7,1355.6 1550.8,1366.1 1569.2,1353.9 1575.3,1357.4 1581.5,1356.5 1594.6,1368.8 1613.8,1367.9 1619.1,1359.1 1625.2,1369.6 1631.3,1367.9 1637.4,1372.3 1656.7,1361.8 1662.8,1361.8 1668.9,1380.1 1675.0,1373.1 1681.1,1368.8 1705.6,1374.0 1711.7,1383.6 1718.7,1384.5 1725.7,1395.9 1744.1,1400.2 1750.2,1393.2 1756.3,1389.8 1762.5,1389.8 1770.0,1409.9 1788.0,1405.7 1794.1,1408.3 1799.8,1397.8 1806.3,1407.4 1812.4,1408.3 1830.7,1420.5 1836.9,1416.2 1843.0,1409.2 1850.0,1426.7 1855.2,1425.8 1874.4,1419.7 1880.5,1417.9 1886.7,1398.7 1892.8,1389.1 1898.9,1395.2 1918.1,1402.2 1924.2,1396.1 1930.3,1406.6 1936.4,1404.8 1942.6,1399.6 1961.8,1391.7 1967.9,1404.8 1974.0,1406.6 1980.1,1412.7 1986.2,1391.7 2005.4,1394.3 2011.6,1395.2 2017.7,1383.9 2023.8,1373.4 2029.9,1370.7 2049.1,1372.5 2055.2,1379.5 2061.3,1383.9 2067.5,1373.4 2073.6,1362.9 2091.9,1376.0 2098.0,1376.0 2104.1,1370.7 2111.1,1360.3 2117.2,1362.9 2135.6,1358.5 2141.7,1351.5 2148.7,1339.3 2154.8,1341.9 2160.9,1341.9 2179.3,1357.6 2185.4,1350.7 2191.5,1353.3 2197.6,1363.8 2203.7,1357.6 2210.0,1355.9 2223.3,1354.1 2229.1,1359.4 2236.1,1363.4 2242.0,1375.1 2247.8,1373.9 2267.6,1380.9 2273.5,1399.6 2279.3,1394.4 2285.1,1404.2 2292.1,1408.9 2316.6,1408.2 2322.4,1397.2 2329.4,1401.9 2335.3,1394.9 2359.7,1387.9 2366.7,1388.4 2372.6,1385.6 2379.6,1379.7 2398.2,1374.4 2404.0,1374.4 2409.9,1372.7 2422.7,1356.9 2441.4,1359.2 2447.7,1354.1 2454.2,1341.3 2460.0,1340.1 2466.5,1335.4 2484.5,1329.6 2491.0,1312.1 2497.3,1308.6 2503.2,1323.8 2509.7,1315.6 2528.8,1319.8 2534.6,1322.6 2540.9,1331.5 2553.3,1335.9 2571.9,1327.7 2577.8,1324.5 2584.8,1310.5 2590.6,1310.5 2597.6,1305.1 2615.5,1310.2 2621.6,1297.0 2627.9,1297.0 2634.2,1283.4 2640.3,1333.1 2659.4,1331.5 2665.7,1335.9 2671.7,1333.1 2678.0,1326.1 2684.3,1314.4 2703.2,1305.1 2709.5,1329.6 2715.4,1342.4 2721.7,1344.3 2727.7,1343.6 2746.8,1354.1 2752.7,1335.9 2771.3,1331.9 2790.0,1332.6" stroke="#2f3f53"/><polyline points="542.3,1501.5 549.3,1508.5 566.4,1504.6 572.6,1500.7 579.6,1509.3 585.8,1507.7 592.8,1514.7 616.1,1516.2 623.1,1504.6 629.3,1515.5 636.3,1508.5 654.1,1503.0 661.1,1498.4 666.1,1501.5 672.0,1498.4 679.8,1499.9 697.6,1501.5 710.8,1503.8 723.2,1498.4 741.9,1499.9 748.1,1510.8 754.3,1499.2 759.7,1497.6 766.7,1506.9 783.8,1504.6 790.8,1506.1 797.0,1517.8 803.2,1516.2 810.2,1506.9 835.0,1512.4 846.7,1520.1 852.9,1520.1 872.3,1528.7 878.5,1524.8 884.7,1531.8 890.9,1513.9 897.1,1523.2 928.2,1513.1 930.0,1513.0 940.9,1506.1 959.5,1506.1 965.7,1514.5 971.9,1510.8 978.1,1508.3 984.3,1505.2 1003.0,1497.5 1009.2,1486.6 1015.4,1478.8 1021.6,1482.5 1027.8,1481.0 1046.5,1490.3 1052.7,1491.9 1058.9,1495.3 1065.1,1490.3 1071.3,1499.0 1089.9,1506.8 1096.1,1502.1 1102.4,1505.2 1108.6,1511.4 1114.8,1522.3 1133.4,1530.1 1139.6,1532.2 1145.8,1511.4 1152.0,1517.6 1158.3,1517.0 1176.9,1505.8 1183.1,1504.3 1189.3,1503.7 1195.5,1499.0 1226.6,1495.9 1232.8,1486.6 1239.0,1477.3 1245.2,1472.6 1251.4,1471.7 1263.9,1471.1 1270.1,1474.2 1276.3,1486.6 1288.7,1489.7 1307.3,1500.6 1313.5,1498.4 1319.8,1498.1 1326.0,1490.3 1332.2,1500.6 1350.8,1495.3 1357.0,1487.2 1363.2,1489.1 1369.4,1484.4 1375.7,1481.0 1394.3,1479.8 1400.5,1477.3 1406.7,1486.6 1419.1,1484.1 1437.8,1485.0 1444.0,1479.8 1456.4,1485.0 1462.6,1495.9 1482.8,1496.2 1489.0,1494.3 1495.2,1490.3 1506.1,1490.0 1524.7,1482.5 1537.1,1488.1 1543.4,1487.2 1549.6,1492.2 1568.2,1485.0 1576.0,1494.3 1582.2,1488.1 1594.6,1493.4 1613.2,1491.2 1619.4,1492.8 1625.7,1499.6 1631.9,1489.7 1638.1,1493.4 1662.9,1481.0 1669.1,1480.4 1675.3,1472.6 1681.6,1469.5 1700.2,1474.2 1706.4,1477.3 1712.6,1485.0 1725.0,1494.3 1730.5,1496.0 1743.3,1498.3 1754.9,1493.2 1761.9,1493.2 1768.9,1501.8 1787.5,1499.0 1800.4,1501.8 1806.2,1514.6 1812.0,1512.3 1830.6,1520.0 1837.6,1515.8 1843.4,1501.3 1856.3,1510.0 1873.7,1510.7 1880.7,1513.9 1893.5,1498.3 1918.0,1504.6 1923.8,1504.1 1930.8,1508.3 1936.6,1507.6 1943.6,1511.1 1961.1,1507.6 1968.1,1515.8 1973.9,1516.9 1980.9,1517.4 1986.7,1502.5 2011.2,1502.5 2018.1,1500.6 2024.0,1496.0 2029.8,1494.1 2055.4,1496.7 2061.2,1500.6 2074.0,1484.3 2092.7,1490.9 2098.5,1489.5 2105.5,1491.3 2111.3,1487.8 2117.1,1494.1 2136.9,1494.3 2148.6,1489.0 2161.4,1492.5 2180.0,1491.3 2185.8,1494.1 2191.7,1494.8 2198.7,1497.8 2204.7,1497.0 2236.1,1501.0 2242.0,1509.2 2247.8,1505.7 2267.6,1510.3 2273.5,1517.3 2279.3,1515.7 2285.1,1515.7 2292.1,1519.0 2316.6,1509.2 2322.4,1509.9 2329.4,1506.8 2335.3,1498.7 2353.9,1494.7 2359.7,1491.0 2366.7,1490.5 2372.6,1483.5 2398.2,1477.7 2404.0,1469.0 2409.9,1471.1 2416.9,1468.4 2422.7,1464.9 2447.7,1464.2 2454.2,1455.1 2460.0,1462.1 2466.5,1455.1 2484.5,1453.9 2491.0,1445.7 2503.2,1449.2 2509.7,1445.7 2528.8,1444.6 2553.3,1459.7 2571.9,1457.9 2577.8,1458.6 2584.8,1449.7 2590.6,1450.9 2597.6,1446.7 2615.5,1446.7 2621.6,1440.4 2634.2,1429.2 2640.3,1440.4 2665.7,1432.2 2671.7,1422.9 2678.0,1426.4 2684.3,1420.1 2703.2,1415.4 2709.5,1418.9 2715.4,1425.2 2721.7,1420.5 2727.7,1420.5 2746.8,1422.9 2752.7,1414.7 2771.3,1410.8 2790.0,1410.8" stroke="#e0539f"/><polyline points="542.3,1501.5 547.8,1512.4 566.4,1506.9 572.6,1511.6 579.6,1521.7 585.8,1527.1 592.8,1526.3 610.7,1524.0 616.9,1527.9 623.1,1513.9 629.3,1523.2 636.3,1509.3 654.1,1504.6 661.1,1499.2 666.1,1510.0 679.8,1504.6 697.6,1494.5 703.0,1501.5 710.8,1503.8 715.5,1489.1 723.2,1497.6 741.9,1498.4 748.1,1510.0 754.3,1511.6 759.7,1503.8 766.7,1511.6 783.8,1503.0 790.8,1503.8 797.0,1516.2 810.2,1501.5 828.8,1506.1 835.0,1506.1 872.3,1515.5 878.5,1517.0 890.9,1517.0 897.1,1530.2 928.2,1529.4 930.0,1528.5 940.9,1517.6 959.5,1522.3 971.9,1533.2 978.1,1523.9 984.3,1507.7 1003.0,1499.6 1015.4,1495.9 1021.6,1497.5 1027.8,1500.6 1052.7,1504.3 1058.9,1499.0 1065.1,1498.1 1071.3,1508.3 1089.9,1520.7 1096.1,1513.0 1102.4,1519.2 1114.8,1553.4 1133.4,1562.7 1139.6,1578.2 1145.8,1551.2 1152.0,1555.5 1158.3,1551.2 1176.9,1539.4 1183.1,1548.7 1189.3,1553.4 1226.6,1548.1 1239.0,1527.9 1245.2,1535.7 1263.9,1534.7 1270.1,1537.8 1276.3,1546.2 1288.7,1545.0 1307.3,1548.1 1313.5,1547.1 1319.8,1544.7 1326.0,1537.8 1332.2,1550.2 1350.8,1534.7 1357.0,1527.0 1363.2,1527.0 1369.4,1521.4 1375.7,1522.3 1400.5,1525.4 1406.7,1530.7 1412.9,1533.2 1437.8,1530.7 1444.0,1532.5 1450.2,1537.8 1456.4,1540.0 1462.6,1555.5 1482.8,1550.9 1489.0,1545.6 1493.7,1547.1 1501.4,1536.3 1506.1,1535.7 1524.7,1525.4 1532.5,1523.2 1538.7,1533.2 1543.4,1534.1 1549.6,1539.4 1569.8,1529.4 1576.0,1545.6 1580.6,1546.2 1594.6,1558.6 1619.4,1558.0 1625.7,1564.8 1631.9,1556.5 1638.1,1556.5 1662.9,1551.8 1669.1,1537.8 1675.3,1530.1 1681.6,1529.4 1700.2,1536.3 1706.4,1536.9 1712.6,1542.5 1718.8,1535.7 1730.0,1537.8 1743.3,1538.2 1750.3,1542.9 1756.1,1542.4 1761.9,1544.8 1768.9,1549.4 1787.5,1538.2 1794.5,1528.9 1800.4,1523.1 1806.2,1526.6 1812.0,1527.7 1830.6,1536.6 1837.6,1539.4 1843.4,1538.2 1849.3,1541.0 1856.3,1549.2 1873.7,1550.3 1881.9,1554.5 1887.7,1553.4 1899.3,1535.2 1918.0,1538.9 1924.5,1534.7 1943.6,1548.2 1962.2,1545.9 1973.9,1552.2 1980.9,1551.7 1986.7,1536.6 2006.5,1533.6 2012.3,1533.1 2024.0,1527.1 2030.9,1528.4 2049.6,1527.7 2061.2,1531.9 2068.2,1526.6 2074.0,1519.6 2092.7,1518.9 2098.5,1521.5 2105.5,1527.7 2111.3,1521.5 2117.1,1529.6 2136.9,1525.4 2148.6,1520.1 2154.4,1523.6 2161.4,1522.6 2180.0,1523.8 2197.5,1523.8 2204.7,1530.1 2229.1,1529.0 2236.1,1520.8 2242.0,1519.2 2247.8,1515.0 2267.6,1513.4 2273.5,1520.8 2279.3,1518.5 2285.1,1519.2 2292.1,1525.5 2310.8,1516.9 2316.6,1516.6 2322.4,1511.5 2329.4,1516.6 2335.3,1515.7 2353.9,1508.0 2359.7,1511.0 2372.6,1502.6 2379.6,1500.5 2398.2,1498.0 2409.9,1483.5 2416.9,1486.5 2422.7,1478.8 2441.4,1482.8 2447.7,1483.5 2454.2,1477.7 2466.5,1489.3 2484.5,1491.2 2491.0,1488.6 2497.3,1477.2 2503.2,1482.3 2509.7,1485.8 2528.8,1485.8 2540.9,1492.1 2553.3,1493.3 2571.9,1496.8 2577.8,1492.1 2584.8,1483.0 2590.6,1484.2 2597.6,1482.3 2615.5,1481.2 2621.6,1476.5 2627.9,1459.0 2634.2,1451.6 2640.3,1460.9 2659.4,1463.7 2665.7,1460.9 2671.7,1444.6 2678.0,1446.9 2684.3,1447.8 2703.2,1442.7 2709.5,1439.7 2715.4,1438.7 2721.7,1429.9 2727.7,1432.9 2746.8,1424.7 2752.7,1422.4 2771.3,1419.8 2790.0,1425.9" stroke="#a061c4"/></g><g font-family="'DejaVu Sans', Verdana, sans-serif" fill="#ffffff"><text x="568" y="854" font-size="34" textLength="1427" lengthAdjust="spacingAndGlyphs">Performance Setorial - 12M - Últimos 12 meses (fallback: aguardando dados 2026)</text><g font-size="24"><text x="539.5" y="1033.4" text-anchor="end">80</text><text x="539.5" y="1152.6" text-anchor="end">60</text><text x="539.5" y="1271.8" text-anchor="end">40</text><text x="539.5" y="1390.9" text-anchor="end">20</text><text x="539.5" y="1510.0" text-anchor="end">0</text><text x="904" y="1640" text-anchor="middle">Mar 2025</text><text x="1283" y="1640" text-anchor="middle">May 2025</text><text x="1662.7" y="1640" text-anchor="middle">Jul 2025</text><text x="2049" y="1640" text-anchor="middle">Sep 2025</text><text x="2429" y="1640" text-anchor="middle">Nov 2025</text><rect x="2889" y="941" width="60" height="4" fill="#f0a53c"/><text x="2960" y="951.8">Ibovespa</text><rect x="2889" y="979" width="60" height="4" fill="#c1442f"/><text x="2960" y="989.8">Small Caps</text><rect x="2889" y="1017" width="60" height="4" fill="#4a8be0"/><text x="2960" y="1027.8">Util. Pública</text><rect x="2889" y="1055" width="60" height="4" fill="#8a9796"/><text x="2960" y="1065.8">Financeiro</text><rect x="2889" y="1093" width="60" height="4" fill="#57b36b"/><text x="2960" y="1103.8">Imobiliário</text><rect x="2889" y="1131" width="60" height="4" fill="#2f3f53"/><text x="2960" y="1141.8">Consumo</text><rect x="2889" y="1169" width="60" height="4" fill="#e0539f"/><text x="2960" y="1179.8">Industrial</text><rect x="2889" y="1207" width="60" height="4" fill="#a061c4"/><text x="2960" y="1217.8">Mat. Básicos</text></g><text transform="translate(468,1352) rotate(-90)" font-size="28" textLength="176.5" lengthAdjust="spacingAndGlyphs">Retorno (%)</text></g></svg>
<div class="t" style="left:432px;top:676px;font-size:48px;font-weight:bold;color:#e2e2e2;letter-spacing:-0.62px;line-height:56px;-webkit-text-stroke:0.5px #e2e2e2;">Performance Setorial</div>
<div style="position:absolute;left:432px;top:752px;width:2720px;height:2px;background:#444;"></div>
<div class="t" style="left:2050px;top:686px;font-size:29.3px;color:#8a8a8a;line-height:34px;">Escolha o período:</div>
<div class="radio" style="left:2335.5px;top:692.5px;background:#fff;border:2px solid #3b78f0;"><div style="position:absolute;left:4px;top:4px;width:15px;height:15px;border-radius:50%;background:#3b78f0;"></div></div>
<div class="t" style="left:2380px;top:686px;font-size:29.5px;color:#dcdcdc;line-height:34px;">YTD - Desde o início do ano</div>
<div class="radio" style="left:2791.5px;top:692.5px;background:#fff;border:2px solid #8e8e93;"></div>
<div class="t" style="left:2835px;top:686px;font-size:29.4px;color:#dcdcdc;line-height:34px;">12M - Últimos 12 meses</div>
<div class="t" style="left:2825px;top:1835px;font-size:26.7px;color:#898989;line-height:30px;">Last Update: 01/01/2026 19:02</div>
<div id="hdr"></div>
<svg style="position:absolute;left:40px;top:50px;z-index:6;overflow:visible" width="560" height="80" viewBox="40 50 560 80">
<defs><linearGradient id="tg" x1="128" y1="0" x2="541" y2="0" gradientUnits="userSpaceOnUse"><stop offset="0" stop-color="#f2c23e"/><stop offset="1" stop-color="#e28f35"/></linearGradient>
<linearGradient id="pk" x1="68" y1="92" x2="92" y2="70" gradientUnits="userSpaceOnUse"><stop offset="0" stop-color="#77797c"/><stop offset=".45" stop-color="#cfd0d2"/><stop offset="1" stop-color="#9fa2a5"/></linearGradient>
<linearGradient id="hs" x1="78.6" y1="81.3" x2="80.7" y2="79.1" gradientUnits="userSpaceOnUse"><stop offset="0" stop-color="#8d8a8c"/><stop offset=".55" stop-color="#e9edf2"/><stop offset="1" stop-color="#9aa2ac"/></linearGradient>
<filter id="glow" x="-10%" y="-60%" width="120%" height="220%"><feGaussianBlur stdDeviation="10"/></filter></defs>
<text x="126.6" y="104.8" font-family="'DejaVu Sans Condensed','DejaVu Sans',Verdana,sans-serif" font-weight="bold" font-size="39" textLength="414" lengthAdjust="spacingAndGlyphs" fill="#f0a030" opacity=".5" filter="url(#glow)">Garimpo Panorama B3</text>
<text x="126.6" y="104.8" font-family="'DejaVu Sans Condensed','DejaVu Sans',Verdana,sans-serif" font-weight="bold" font-size="39" textLength="414" lengthAdjust="spacingAndGlyphs" fill="url(#tg)" stroke="url(#tg)" stroke-width="0.7">Garimpo Panorama B3</text>
<line x1="89.1" y1="89.8" x2="105.4" y2="105" stroke="#1b1e22" stroke-width="3.8" stroke-linecap="round"/>
<line x1="90.2" y1="88.9" x2="105.6" y2="103.3" stroke="#30353a" stroke-width="0.9" stroke-linecap="round"/>
<line x1="79.6" y1="80.2" x2="89.3" y2="90" stroke="url(#hs)" stroke-width="3"/>
<path d="M68.3,91.5 C68,80 76,72 91.05,70.85 C84,74.5 79,80 76,84 C73.5,87.5 71,90.5 68.3,91.5 Z" fill="url(#pk)" stroke="#5a5d60" stroke-width="0.5"/>
</svg>
<div class="btn" style="left:3203px;width:153px;background:#5498da;">Refresh</div>
<div class="btn" style="left:3376px;width:140px;background:#6b7ee6;">Close</div>
</div></div>
</body></html>
